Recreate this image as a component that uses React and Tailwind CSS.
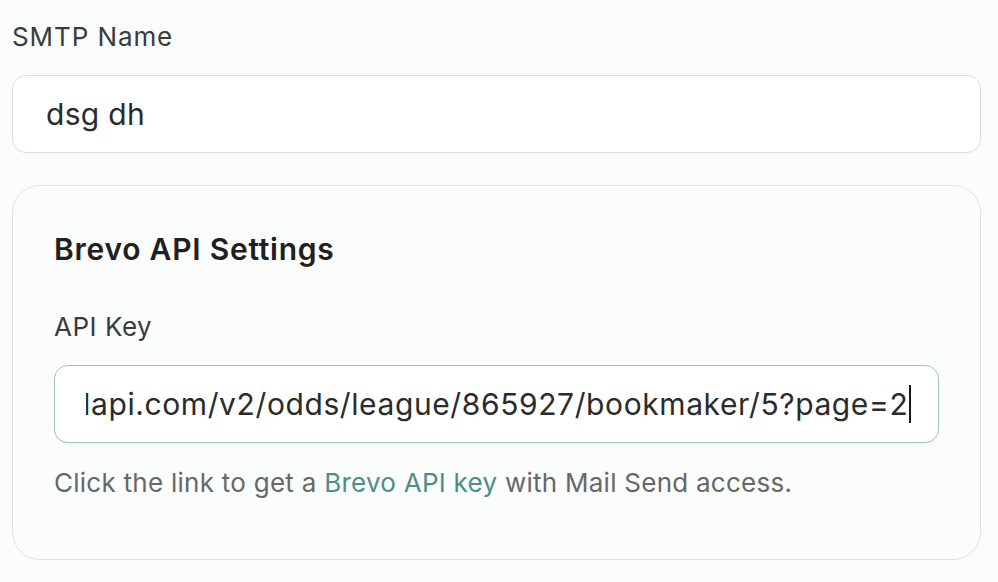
export default function App() {
  return (
    <div className="min-h-screen w-full bg-[#fafbfb]" style={{ fontFamily: "Inter, 'Noto Sans', sans-serif" }}>
      <div className="ml-[12px] w-[969px] pt-[19px]">
        <div className="text-[26px] leading-[36px] tracking-[0.035em] text-[#3a3b3b]">SMTP Name</div>
        <div className="mt-[20px] flex h-[78px] items-center rounded-[14px] border border-[#dcdfdf] bg-white pl-[33px] text-[30px] tracking-[0.01em] text-[#2a2b2b]">
          dsg dh
        </div>
        <div className="mt-[32px] rounded-[28px] border border-[#e1e3e3] bg-[#fbfcfc] px-[41px] pt-[45px] pb-[58px]">
          <div className="text-[30px] font-semibold leading-[36px] tracking-[0.025em] text-[#1f2020]">Brevo API Settings</div>
          <div className="mt-[42px] text-[26px] leading-[36px] tracking-[0.02em] text-[#3a3b3b]">API Key</div>
          <div className="mt-[20px] flex h-[78px] items-center overflow-hidden rounded-[14px] border border-[#a2c6c6] bg-white pl-[31px] pr-[20px] shadow-[0_1px_2px_rgba(0,0,0,0.06)]">
            <div className="flex min-w-0 flex-1 items-center overflow-hidden">
              <span className="-ml-[14px] whitespace-nowrap text-[30px] leading-[40px] tracking-[0.02em] text-[#2a2b2b]">
                dapi.com/v2/odds/league/865927/bookmaker/5?page=2
              </span>
              <span className="ml-[1px] h-[38px] w-[2px] shrink-0 bg-[#1a1a1a]"></span>
            </div>
          </div>
          <div className="mt-[22px] text-[26px] leading-[36px] tracking-[0.01em] text-[#666868]">
            Click the link to get a <span className="text-[#4a8f88]">Brevo API key</span> with Mail Send access.
          </div>
        </div>
      </div>
    </div>
  );
}
